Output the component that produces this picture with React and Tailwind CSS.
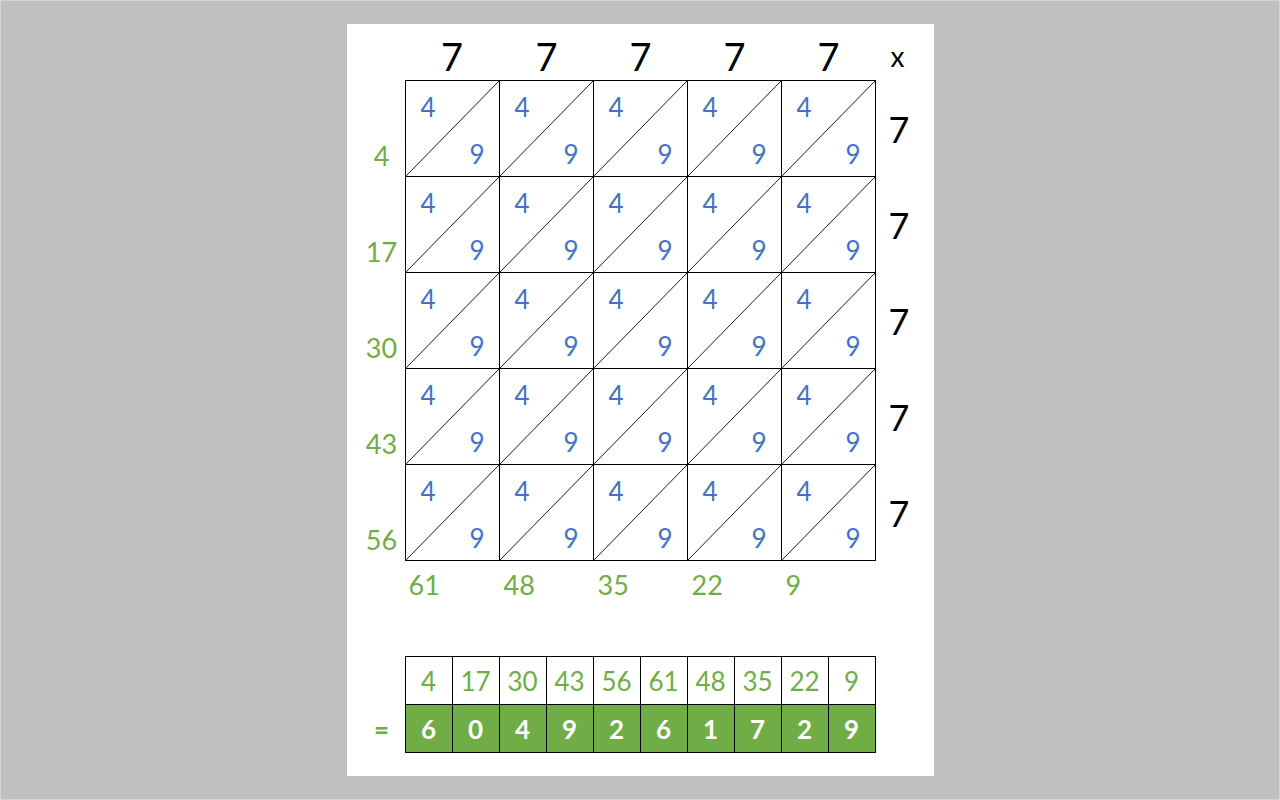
import React from "react";

const GREEN = "text-[#70ad47]";
const BLUE = "text-[#4472c4]";

const leftLabels = ["4", "17", "30", "43", "56"];
const bottomLabels = ["61", "48", "35", "22", "9"];
const sums = ["4", "17", "30", "43", "56", "61", "48", "35", "22", "9"];
const digits = ["6", "0", "4", "9", "2", "6", "1", "7", "2", "9"];

function Cell({ first, top }) {
  return (
    <div
      className={`relative flex flex-col justify-between h-full border-r border-b border-black pl-[15px] pr-[14px] pt-[13px] pb-[9px] ${
        first ? "w-[95px] border-l" : "w-[94px]"
      } ${top ? "border-t" : ""}`}
    >
      {/* diagonal from bottom-left to top-right */}
      <svg className="absolute inset-0 w-full h-full" preserveAspectRatio="none" viewBox="0 0 100 100">
        <line x1="0" y1="100" x2="100" y2="0" stroke="#000" strokeWidth="0.9" vectorEffect="non-scaling-stroke" />
      </svg>
      <span className={`self-start text-[26px] leading-none ${BLUE}`}>4</span>
      <span className={`self-end text-[26px] leading-none ${BLUE}`}>9</span>
    </div>
  );
}

export default function App() {
  return (
    <div className="w-[1280px] h-[800px] bg-[#c0c0c0] border border-[#d6d6d6] flex justify-center pt-[23px] font-[Lato,sans-serif]">
      <div className="w-[587px] h-[752px] bg-white flex flex-col">
        {/* multiplicand */}
        <div className="flex h-[56px]">
          <div className="w-[58px]" />
          {[0, 1, 2, 3, 4].map((i) => (
            <div
              key={i}
              className={`${i === 0 ? "w-[95px]" : "w-[94px]"} text-center text-[38px] leading-none pt-[13px] text-black`}
            >
              7
            </div>
          ))}
          <div className="flex-1 pl-[15px] pt-[18px] text-[28px] leading-none text-black">x</div>
        </div>

        {/* lattice */}
        {leftLabels.map((label, r) => (
          <div key={r} className={`flex ${r === 0 ? "h-[97px]" : "h-[96px]"}`}>
            <div className={`w-[58px] flex items-end justify-center pl-[12px] pb-[8px] text-[27px] leading-none ${GREEN}`}>
              {label}
            </div>
            {[0, 1, 2, 3, 4].map((c) => (
              <Cell key={c} first={c === 0} top={r === 0} />
            ))}
            <div className="flex-1 flex items-center pl-[13px] text-[36px] leading-none text-black">7</div>
          </div>
        ))}

        {/* diagonal sums along the bottom */}
        <div className="flex h-[95px]">
          <div className="w-[58px]" />
          {bottomLabels.map((label, i) => (
            <div
              key={i}
              className={`${i === 0 ? "w-[95px]" : "w-[94px]"} pl-[4px] pt-[10px] text-[27px] leading-none ${GREEN}`}
            >
              {label}
            </div>
          ))}
        </div>

        {/* result table */}
        <div className="flex">
          <div className="w-[58px] flex flex-col">
            <div className="h-[49px]" />
            <div className={`h-[48px] flex items-center justify-center pl-[12px] text-[26px] font-bold leading-none ${GREEN}`}>
              =
            </div>
          </div>
          <div className="flex flex-col">
            <div className="flex">
              {sums.map((s, i) => (
                <div
                  key={i}
                  className={`h-[49px] flex items-center justify-center border-t border-r border-b border-black text-[26px] leading-none ${GREEN} ${
                    i === 0 ? "w-[48px] border-l" : "w-[47px]"
                  }`}
                >
                  {s}
                </div>
              ))}
            </div>
            <div className="flex">
              {digits.map((d, i) => (
                <div
                  key={i}
                  className={`h-[48px] flex items-center justify-center bg-[#70ad47] border-r border-b border-black text-[26px] font-bold leading-none text-white ${
                    i === 0 ? "w-[48px] border-l" : "w-[47px]"
                  }`}
                >
                  {d}
                </div>
              ))}
            </div>
          </div>
        </div>
      </div>
    </div>
  );
}
